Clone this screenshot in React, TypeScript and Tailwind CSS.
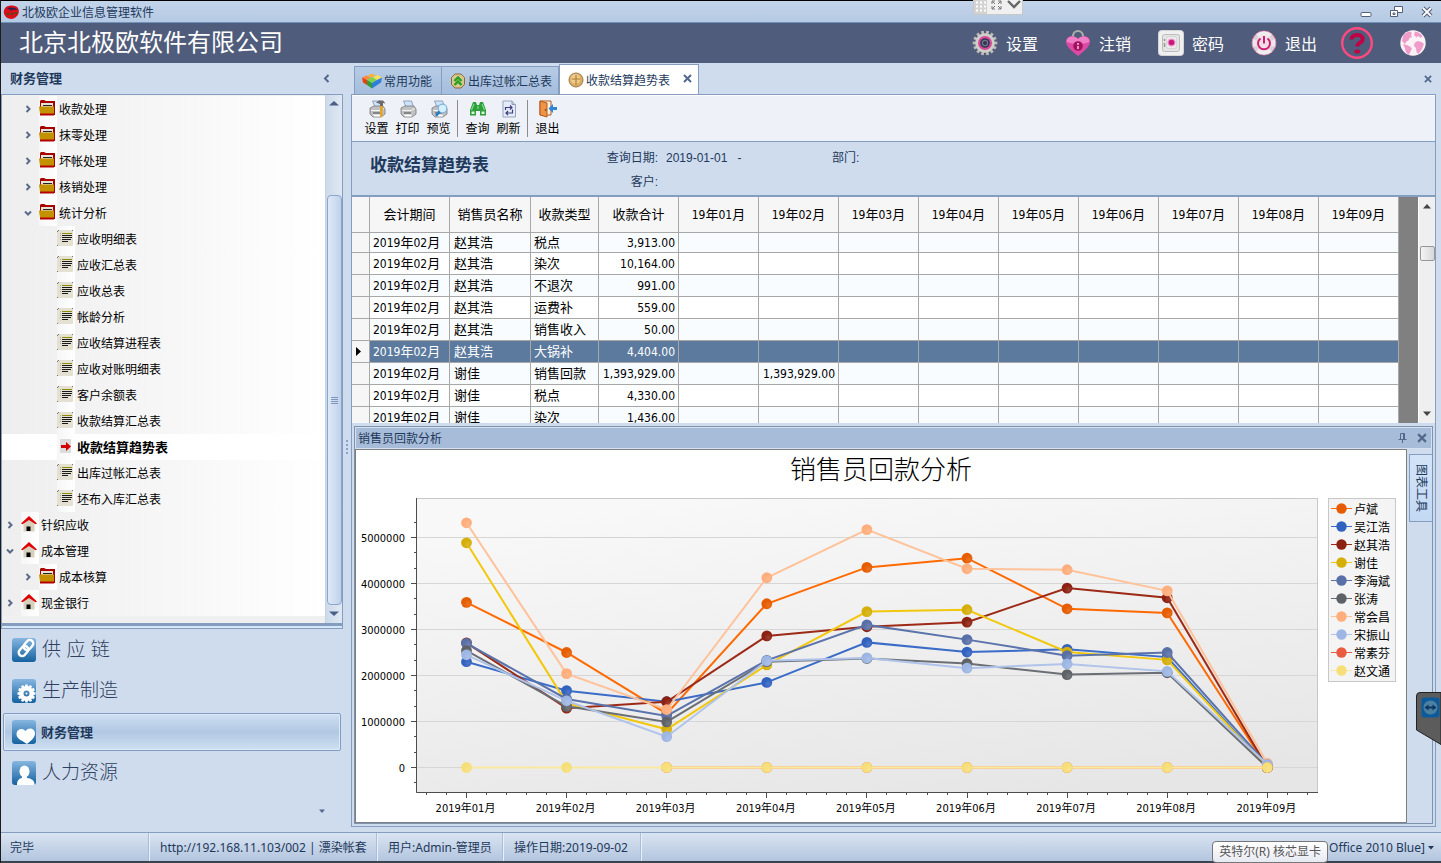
import React from "react";

const CATEGORIES = ["01", "02", "03", "04", "05", "06", "07", "08", "09"];

type Series = { name: string; line: string; dot: string; values: (number | null)[] };

// Values are in thousands.
const SERIES: Series[] = [
  { name: "卢斌", line: "#ff6a00", dot: "#e65c00", values: [3590, 2500, 1170, 3560, 4350, 4550, 3450, 3360, 0] },
  { name: "吴江浩", line: "#3a6cc8", dot: "#3162c0", values: [2300, 1670, 1430, 1850, 2720, 2510, 2570, 2400, 0] },
  { name: "赵其浩", line: "#9c2a17", dot: "#8c2111", values: [2710, 1290, 1430, 2860, 3060, 3160, 3900, 3690, 0] },
  { name: "谢佳", line: "#f2c80f", dot: "#d6ae0a", values: [4885, 1400, 830, 2230, 3390, 3430, 2510, 2340, 0] },
  { name: "李海斌", line: "#5a73ab", dot: "#586fa7", values: [2700, 1490, 1120, 2330, 3100, 2780, 2430, 2500, 60] },
  { name: "张涛", line: "#6b6f75", dot: "#5e6267", values: [2540, 1330, 990, 2300, 2370, 2260, 2020, 2060, 0] },
  { name: "常会昌", line: "#ffc39b", dot: "#ffae7c", values: [5320, 2040, 1260, 4125, 5170, 4320, 4300, 3840, 90] },
  { name: "宋振山", line: "#b0c3ea", dot: "#9db6e4", values: [2450, 1450, 670, 2320, 2380, 2160, 2250, 2090, 70] },
  { name: "常素芬", line: "#f9ba93", dot: "#ea5a40", values: [null, null, 0, 0, 0, 0, 0, 0, 0] },
  { name: "赵文通", line: "#fae9a0", dot: "#f6de78", values: [0, 0, 0, 0, 0, 0, 0, 0, 0] },
];

const px = (i: number) => 466.5 + i * 100.1;
const py = (v: number) => 767.5 - (v * 46) / 1000;

function Chart() {
  const minorY = [];
  for (let k = -1; k <= 16; k++) minorY.push(767.5 - (k * 46) / 3);
  const minorX = [];
  for (let k = 0; k <= 44; k++) minorX.push(426.5 + k * 20.02);
  return (
    <svg className="block h-full w-full" viewBox="356 450 1050 372" role="img" aria-label="销售员回款分析">
      <defs>
        <linearGradient id="plot" x1="0.3" y1="0" x2="0.7" y2="1">
          <stop offset="0" stopColor="#f8f8f8" />
          <stop offset="1" stopColor="#e6e6e6" />
        </linearGradient>
        <radialGradient id="gloss" cx="0.65" cy="0.65" r="0.6">
          <stop offset="0" stopColor="#fff" stopOpacity="0.14" />
          <stop offset="0.7" stopColor="#fff" stopOpacity="0" />
        </radialGradient>
      </defs>
      <text x="881" y="479" textAnchor="middle" fontSize="26" fontWeight="300">销售员回款分析</text>
      <rect x="416.5" y="498.5" width="901" height="294" fill="url(#plot)" stroke="#c8c8c8" />
      {[0, 1, 2, 3, 4, 5].map((m) => (
        <g key={m}>
          <path d={`M417 ${py(m * 1000)}H1317`} stroke="#d6d6d6" />
          <path d={`M411 ${py(m * 1000)}h5`} stroke="#4d4d4d" />
          <text x="405" y={py(m * 1000) + 4} textAnchor="end" fontSize="11">{m * 1000000}</text>
        </g>
      ))}
      {minorY.map((y) => <path key={y} d={`M414 ${Math.floor(y) + 0.5}h2`} stroke="#4d4d4d" />)}
      {minorX.map((x) => <path key={x} d={`M${Math.floor(x) + 0.5} 793v2`} stroke="#4d4d4d" />)}
      <path d="M416.5 498V792.5H1318" fill="none" stroke="#4d4d4d" />
      {CATEGORIES.map((c, i) => (
        <g key={c}>
          <path d={`M${Math.floor(px(i)) + 0.5} 793v5`} stroke="#4d4d4d" />
          <text x={px(i) - 1} y="812" textAnchor="middle" fontSize="11">2019年{c}月</text>
        </g>
      ))}
      {SERIES.map((s) => {
        const pts = s.values.map((v, i) => ({ v, i })).filter((p) => p.v !== null);
        return (
          <g key={s.name}>
            <polyline
              points={pts.map((p) => `${px(p.i)},${py(p.v as number)}`).join(" ")}
              fill="none"
              stroke={s.line}
              strokeWidth={s.name === "常素芬" ? 3 : 2}
            />
            {pts.map((p) => (
              <g key={p.i}>
                <circle cx={px(p.i)} cy={py(p.v as number)} r="5.4" fill={s.dot} />
                <circle cx={px(p.i)} cy={py(p.v as number)} r="5.4" fill="url(#gloss)" />
              </g>
            ))}
          </g>
        );
      })}
      <rect x="1328.500" y="498.500" width="67" height="183" fill="#f4f4f4" stroke="#c8c8c8" />
      {SERIES.map((s, i) => (
        <g key={s.name}>
          <path d={`M1331 ${508.5 + i * 18}h21`} stroke={s.name === "常素芬" ? s.dot : s.line} />
          <circle cx="1341.500" cy={508.5 + i * 18} r="5.2" fill={s.dot} />
          <text x="1354" y={513.5 + i * 18} fontSize="12">{s.name}</text>
        </g>
      ))}
    </svg>
  );
}

/* ---------- icons ---------- */

const FolderIcon = () => (
  <svg width="16" height="16" viewBox="0 0 16 16" aria-hidden="true">
    <path d="M1 7V1l1-1h3l2 1h9v14H1z" fill="#a80000" />
    <path d="M2 3h12v4H2z" fill="#e6e2d6" />
    <path d="M4 5.500h9" stroke="#222" />
    <path d="M0 6.500h15V14H1z" fill="#c49200" />
    <path d="M1 13.500h14v2H1z" fill="#b40000" />
  </svg>
);

const DocIcon = () => (
  <svg width="16" height="16" viewBox="0 0 16 16" aria-hidden="true">
    <rect x="0" y="0" width="16" height="16" rx="1" fill="#e4e0d2" />
    <path d="M0 1.500h1M1 .5h1M15 .5h1M0 15.500h1" stroke="#777" />
    <path d="M5 3.500h10" stroke="#8f8b00" />
    <path d="M5 5.500h10M5 7.500h10M5 9.500h9M5 11.500h6" stroke="#1a1a1a" />
    <path d="M3 3.500h1M3 5.500h1M3 7.500h1M3 9.500h1" stroke="#aaa" />
  </svg>
);

const ActiveIcon = () => (
  <svg width="16" height="16" viewBox="0 0 16 16" aria-hidden="true">
    <rect x="3" y="1" width="11" height="14" rx="1" fill="#dcdcdc" />
    <path d="M4 7h5V4l5 4.500-5 4.500v-3H4z" fill="#d40000" />
  </svg>
);

const HomeIcon = () => (
  <svg width="16" height="16" viewBox="0 0 16 16" aria-hidden="true">
    <path d="M2.500 7.500L8 3l5.500 4.500V15.500h-11z" fill="#d6d1bd" />
    <path d="M0 7.500L8 0l8 7.500-1.500.8L8 4 1.500 8.300z" fill="#e00000" />
    <rect x="5.500" y="10.500" width="4" height="4.500" fill="#000" />
  </svg>
);

const Arrow = ({ open }: { open?: boolean }) => (
  <svg width="8" height="8" viewBox="0 0 8 8" aria-hidden="true" className="shrink-0">
    <path d={open ? "M1 2.500l3 3 3-3" : "M2.500 1l3 3-3 3"} fill="none" stroke="#5a6a8a" strokeWidth="2" />
  </svg>
);

const Cross = ({ size = 9, color = "#54688e" }: { size?: number; color?: string }) => (
  <svg width={size} height={size} viewBox="0 0 9 9" aria-hidden="true">
    <path d="M1 1l7 7M8 1L1 8" stroke={color} strokeWidth="2" />
  </svg>
);

const GearTeeth = ({ n, r1, r2, w, fill, c }: { n: number; r1: number; r2: number; w: number; fill: string; c: number }) => (
  <g stroke={fill} strokeWidth={w}>
    {Array.from({ length: n }, (_, i) => {
      const a = (i * 2 * Math.PI) / n;
      return (
        <path
          key={i}
          d={`M${c + r1 * Math.cos(a)} ${c + r1 * Math.sin(a)}L${c + r2 * Math.cos(a)} ${c + r2 * Math.sin(a)}`}
        />
      );
    })}
  </g>
);

const SettingsBig = () => (
  <svg width="26" height="26" viewBox="0 0 26 26" aria-hidden="true">
    <GearTeeth n={14} r1={7} r2={12.3} w={2.8} fill="#bdbdb8" c={13} />
    <circle cx="13" cy="13" r="9.800" fill="#cfcfca" />
    <circle cx="13" cy="13" r="7" fill="#d9489a" />
    <circle cx="13" cy="13" r="4.800" fill="#33384f" />
    <circle cx="13" cy="13" r="2.600" fill="none" stroke="#6d7693" strokeWidth="1.200" />
  </svg>
);

const LockBig = () => (
  <svg width="26" height="28" viewBox="0 0 26 28" aria-hidden="true">
    <path d="M8 10V7a5 5 0 0 1 10 0v3" fill="none" stroke="#a9aea6" strokeWidth="2.200" />
    <path d="M13 27C8 23 1 18 1 12.500 1 7 9 5.500 13 10c4-4.500 12-3 12 2.500C25 18 18 23 13 27z" fill="#dd4aa6" />
    <path d="M1.500 13C2 7 9 6 13 10c4-4 11-3 11.500 3-7 2.500-16 2.500-23 0z" fill="#ef7ec6" />
    <circle cx="13" cy="17" r="4.800" fill="#a3125f" />
    <path d="M13 14v2M13 17v3" stroke="#f2a5d2" strokeWidth="1.800" />
  </svg>
);

const SafeBig = () => (
  <svg width="26" height="26" viewBox="0 0 26 26" aria-hidden="true">
    <rect x="0.500" y="0.500" width="25" height="25" rx="3" fill="#f0f0f0" stroke="#d4d4d4" />
    <rect x="4.500" y="4.500" width="17" height="17" rx="2" fill="#e4e4e4" stroke="#bdbdbd" />
    <rect x="8.500" y="6.500" width="10" height="12" rx="2" fill="#ededed" stroke="#d5d5d5" />
    <circle cx="13.500" cy="12.500" r="4" fill="#f09aca" />
    <circle cx="13.500" cy="12.500" r="2.800" fill="#c9197e" />
    <path d="M6.500 9v2M6.500 13v4" stroke="#999" strokeWidth="1.500" />
  </svg>
);

const PowerBig = () => (
  <svg width="26" height="26" viewBox="0 0 26 26" aria-hidden="true">
    <circle cx="13" cy="13" r="12" fill="#d9d2d6" stroke="#cf6ba0" />
    <path d="M13 13L5 4a12 12 0 0 1 16 0zM13 13L5 22a12 12 0 0 0 16 0z" fill="#fff" opacity=".6" />
    <path d="M13 13L1.500 9v8zM13 13l11.500-4v8z" fill="#fff" opacity=".5" />
    <circle cx="13" cy="13" r="8" fill="#f1dde7" opacity=".7" />
    <path d="M9.500 8.500a6 6 0 1 0 7 0" fill="none" stroke="#d01f72" strokeWidth="2" />
    <path d="M13 6v7.500" stroke="#d01f72" strokeWidth="2" />
  </svg>
);

const HelpBig = () => (
  <svg width="32" height="32" viewBox="0 0 32 32" aria-hidden="true">
    <circle cx="16" cy="16" r="14.800" fill="none" stroke="#ff4a80" strokeWidth="2.400" />
    <path d="M10.500 12.500c0-3 2.500-4.500 5.500-4.500s5.700 1.500 5.700 4.200c0 3.500-5.500 3.300-5.500 7.300" fill="none" stroke="#c00045" strokeWidth="4" />
    <ellipse cx="16.200" cy="24.500" rx="3" ry="2" fill="#c00045" />
  </svg>
);

const GlobeBig = () => (
  <svg width="26" height="26" viewBox="0 0 26 26" aria-hidden="true">
    <circle cx="13" cy="13" r="12.700" fill="#faf2f6" />
    <path d="M3 6c1.500-2.500 4-4 7-4.500l2 1.500-1 2 1 2-2.500 1-1 2.500-2 1L5 14l-3-3zM15 1.500c3 .5 5.500 2 7.500 4.500L21 8l-3-2-1.500 1.500L14 5zM3 14l4 1 3 1.500 2 2-1.500 3L9 25l-3-2.500-1-4zM14.500 13l3-2 4 1 2.500 2-2 5-3.500 5-2-2-.5-4-2-2z" fill="#f09cc8" />
  </svg>
);

const TabCubes = () => (
  <svg width="20" height="16" viewBox="0 0 20 16" aria-hidden="true">
    <path d="M0 4.500L4.500 2.500 9 4.500 5 7z" fill="#ff8a3c" />
    <path d="M6 2.500L10 .5l3.500 2L10 4.500z" fill="#ffb02c" />
    <path d="M11 5l4.500-3L20 4.500 15 7z" fill="#ffe04c" />
    <path d="M5 7l5-3 5 3-5 3z" fill="#7fd24c" />
    <path d="M0 4.500L5 7v5L1 9.500z" fill="#e8400e" />
    <path d="M5 7l5 3v5.500L5 12z" fill="#2f9d3a" />
    <path d="M10 10l5-3 5-2.500-1 5-9 6z" fill="#2f7fd8" />
  </svg>
);

const TabHex = () => (
  <svg width="16" height="16" viewBox="0 0 16 16" aria-hidden="true">
    <path d="M5 1h6l3.500 3.500v7L11 15H5l-3.500-3.500v-7z" fill="#d8c88c" stroke="#8a6a3e" />
    <path d="M4.500 8L8 4.500 11.500 8M4.500 12L8 8.500l3.500 3.500" fill="none" stroke="#25a022" strokeWidth="2.400" />
  </svg>
);

const TabCoin = () => (
  <svg width="16" height="16" viewBox="0 0 16 16" aria-hidden="true">
    <circle cx="8" cy="8" r="7" fill="#d9ad62" stroke="#9b7a4b" />
    <circle cx="7.500" cy="7" r="5" fill="#edcb8a" />
    <path d="M8 3v10M3.500 7h9" stroke="#b27f37" strokeWidth="1.200" />
  </svg>
);

const PrinterShape = () => (
  <g>
    <path d="M4.500 1h8l2 6H7z" fill="#cfe3fb" stroke="#7d93b4" strokeWidth=".8" />
    <path d="M2 8l4-2h9l2 3v5l-4 3H5l-3-3z" fill="#bfc1c3" stroke="#77797c" strokeWidth=".8" />
    <path d="M3 10.500h9l4-2" stroke="#f2f2f2" fill="none" />
    <path d="M5 13h7" stroke="#4a4a4a" />
    <path d="M5 14.500h7l1 2H6z" fill="#fff" />
  </g>
);

const SetupIcon = () => (
  <svg width="18" height="18" viewBox="0 0 18 18" aria-hidden="true">
    <PrinterShape />
    <path d="M8 2.500L11 .5h4l2.500 3L15 3v3h-3V4z" fill="#6c6c6c" />
    <path d="M12 6h3l-.5 11H12z" fill="#e2a52a" />
  </svg>
);
const PrintIcon = () => (
  <svg width="18" height="18" viewBox="0 0 18 18" aria-hidden="true"><PrinterShape /></svg>
);
const PreviewIcon = () => (
  <svg width="18" height="18" viewBox="0 0 18 18" aria-hidden="true">
    <PrinterShape />
    <circle cx="12.500" cy="8.500" r="4.300" fill="#d4f0ff" stroke="#7fb4da" strokeWidth="1.200" />
    <path d="M9.500 11.500L6 16" stroke="#1f7fc8" strokeWidth="2.600" />
  </svg>
);
const FindIcon = () => (
  <svg width="18" height="18" viewBox="0 0 18 18" aria-hidden="true">
    <path d="M4 2h3l1 3h2l1-3h3l3 8v5.500h-6V11H7v4.500H1V10z" fill="#2f9e3c" />
    <path d="M5 4l-2.500 6M13 4l2.500 6M9 6v3" stroke="#7fdc86" strokeWidth="1.200" />
    <path d="M2.500 11.500h3v2.500h-3zM12.500 11.500h3v2.500h-3z" fill="#d9f7d9" />
  </svg>
);
const RefreshIcon = () => (
  <svg width="18" height="18" viewBox="0 0 18 18" aria-hidden="true">
    <path d="M3 1h9l3.500 3.500V17H3z" fill="#e3ecf8" stroke="#95a5bf" />
    <path d="M12 1v3.500h3.500" fill="#c5d3e8" stroke="#8b9cb8" />
    <path d="M5.500 10V7.500h6M10 5.500l2 2-2 2M12.500 9.500V13h-6M8 11l-2 2 2 2" fill="none" stroke="#3c3f7c" strokeWidth="1.200" />
  </svg>
);
const ExitIcon = () => (
  <svg width="18" height="18" viewBox="0 0 18 18" aria-hidden="true">
    <path d="M1 1h11v14H1z" fill="#fff2e0" stroke="#b3581e" />
    <path d="M1 1l7 2v14l-7-2z" fill="#ee9444" stroke="#b3581e" />
    <circle cx="6.500" cy="10" r=".8" fill="#6b2e08" />
    <path d="M9.500 8.500l4.500-4.500v3h4v3h-4v3z" fill="#2d86d8" />
  </svg>
);

const Tile = ({ children }: { children: React.ReactNode }) => (
  <svg width="24" height="24" viewBox="0 0 24 24" aria-hidden="true">
    <defs>
      <linearGradient id="tile" x1="0" y1="0" x2="0" y2="1">
        <stop offset="0" stopColor="#86b6e0" />
        <stop offset="1" stopColor="#15629f" />
      </linearGradient>
    </defs>
    <rect width="24" height="24" rx="3" fill="url(#tile)" />
    {children}
  </svg>
);

/* ---------- data ---------- */

type Node = { text: string; level: 0 | 1 | 2; kind: "folder" | "doc" | "home" | "active"; open?: boolean };

const TREE: Node[] = [
  { text: "收款处理", level: 1, kind: "folder" },
  { text: "抹零处理", level: 1, kind: "folder" },
  { text: "坏帐处理", level: 1, kind: "folder" },
  { text: "核销处理", level: 1, kind: "folder" },
  { text: "统计分析", level: 1, kind: "folder", open: true },
  { text: "应收明细表", level: 2, kind: "doc" },
  { text: "应收汇总表", level: 2, kind: "doc" },
  { text: "应收总表", level: 2, kind: "doc" },
  { text: "帐龄分析", level: 2, kind: "doc" },
  { text: "应收结算进程表", level: 2, kind: "doc" },
  { text: "应收对账明细表", level: 2, kind: "doc" },
  { text: "客户余额表", level: 2, kind: "doc" },
  { text: "收款结算汇总表", level: 2, kind: "doc" },
  { text: "收款结算趋势表", level: 2, kind: "active" },
  { text: "出库过帐汇总表", level: 2, kind: "doc" },
  { text: "坯布入库汇总表", level: 2, kind: "doc" },
  { text: "针织应收", level: 0, kind: "home" },
  { text: "成本管理", level: 0, kind: "home", open: true },
  { text: "成本核算", level: 1, kind: "folder" },
  { text: "现金银行", level: 0, kind: "home" },
];

const INDENT = { 0: "pl-[4px]", 1: "pl-[22px]", 2: "pl-[40px]" };

const ROWS = [
  ["赵其浩", "税点", "3,913.00", ""],
  ["赵其浩", "染次", "10,164.00", ""],
  ["赵其浩", "不退次", "991.00", ""],
  ["赵其浩", "运费补", "559.00", ""],
  ["赵其浩", "销售收入", "50.00", ""],
  ["赵其浩", "大锅补", "4,404.00", ""],
  ["谢佳", "销售回款", "1,393,929.00", "1,393,929.00"],
  ["谢佳", "税点", "4,330.00", ""],
  ["谢佳", "染次", "1,436.00", ""],
];
const SELECTED = 5;

/* ---------- regions ---------- */

function TitleBar() {
  return (
    <div className="flex h-[23px] shrink-0 items-center border-t border-b border-t-black border-b-[#6f93bd] bg-linear-to-b from-[#c3d4ea] to-[#b5cae3] pl-[2px] text-[12px] text-[#1e395b]">
      <svg width="17" height="16" viewBox="0 0 17 16" aria-hidden="true">
        <path d="M3 3C6 1 11 1 14 3c3 3 2 8-1 10-3 3-8 2-10 0C0 10 0 6 3 3z" fill="#d8101c" />
        <path d="M4 4.500c3-2 7-1 11 1l-4 .5-1.500-.8-1 1.800L7 5.500z" fill="#2a2350" />
        <path d="M4 10h2M8 10h2M12 9h2" stroke="#2f5a12" strokeWidth="2" />
      </svg>
      <span className="ml-[2px] pt-[2px]">北极欧企业信息管理软件</span>
      <div className="ml-auto flex items-center gap-[18px] pr-[8px]">
        <button aria-label="最小化" className="h-[12px]">
          <svg width="12" height="12" viewBox="0 0 12 12"><rect x="1" y="6.500" width="10" height="4" rx="1" fill="#fff" stroke="#55617a" /></svg>
        </button>
        <button aria-label="还原" className="h-[12px]">
          <svg width="13" height="12" viewBox="0 0 13 12" fill="#fff" stroke="#55617a"><path d="M4.500.5h8v6h-8z" /><path d="M.5 4.500h7v6h-7z" /><path d="M3 7h2v1.500H3z" /></svg>
        </button>
        <button aria-label="关闭" className="h-[12px]">
          <svg width="12" height="12" viewBox="0 0 12 12"><path d="M2 2l8 8M10 2L2 10" stroke="#55617a" strokeWidth="4" /><path d="M2 2l8 8M10 2L2 10" stroke="#fff" strokeWidth="1.800" /></svg>
        </button>
      </div>
    </div>
  );
}

function Header() {
  const link = "flex items-center gap-[8px]";
  return (
    <header className="flex h-[40px] shrink-0 items-center bg-[#505c7b] pl-[18px] pr-[15px] text-white">
      <h1 className="text-[24px] leading-[40px]">北京北极欧软件有限公司</h1>
      <nav className="ml-auto flex items-center text-[16px]">
        <button className={`${link} mr-[27px]`}><SettingsBig /><span className="pt-[3px]">设置</span></button>
        <button className={`${link} mr-[27px]`}><LockBig /><span className="pt-[3px]">注销</span></button>
        <button className={`${link} mr-[27px]`}><SafeBig /><span className="pt-[3px]">密码</span></button>
        <button className={`${link} mr-[24px]`}><PowerBig /><span className="pt-[3px]">退出</span></button>
        <button aria-label="帮助" className="mr-[27px]"><HelpBig /></button>
        <button aria-label="网络"><GlobeBig /></button>
      </nav>
    </header>
  );
}

function TreeRow({ node }: { node: Node }) {
  const active = node.kind === "active";
  return (
    <li>
      <button
        className={`flex h-[26px] w-full items-center text-left ${INDENT[node.level]} ${
          active ? "bg-white font-bold" : "bg-linear-to-r from-[#eeeeee] to-white"
        }`}
      >
        <span className="flex w-[15px] shrink-0">{node.level < 2 && <Arrow open={node.open} />}</span>
        <span className="flex h-[26px] w-[18px] shrink-0 items-center bg-linear-to-r from-[#f6f6f6] to-white pb-[2px]">
          {node.kind === "folder" && <FolderIcon />}
          {node.kind === "doc" && <DocIcon />}
          {node.kind === "home" && <HomeIcon />}
          {active && <ActiveIcon />}
        </span>
        <span className={active ? "pt-[2px] pl-[2px] text-[13px]" : "pt-[2px] pl-[2px] text-[12px]"}>{node.text}</span>
      </button>
    </li>
  );
}

function Sidebar() {
  const nav = "flex h-[41px] w-full items-center gap-[6px] px-[11px] text-[19px] font-light text-[#2f415f]";
  return (
    <aside className="flex w-[350px] shrink-0 flex-col">
      <div className="flex h-[31px] shrink-0 items-center justify-between pl-[9px] pr-[20px]">
        <h2 className="pt-px text-[13px] font-bold text-[#1e395b]">财务管理</h2>
        <svg width="8" height="9" viewBox="0 0 8 9" aria-hidden="true"><path d="M5.500 1L2 4.500 5.500 8" fill="none" stroke="#54688e" strokeWidth="2" /></svg>
      </div>
      <div className="flex min-h-0 flex-1">
        <div className="flex w-[342px] flex-col">
          <div className="flex min-h-0 flex-1 border border-[#859ebf] bg-[#f0f0f0]">
            <ul className="min-w-0 flex-1 overflow-hidden pt-px">
              {TREE.map((n) => <TreeRow key={n.text} node={n} />)}
            </ul>
            <div className="flex w-[17px] flex-col items-center border-l border-[#c3d3e8] bg-linear-to-r from-[#cddaea] to-[#dfe9f5]">
              <svg className="my-[5px]" width="10" height="6" viewBox="0 0 10 6" aria-hidden="true"><path d="M0 5.500L5 1l5 4.500z" fill="#4b5f86" /></svg>
              <div className="mt-[84px] flex w-[15px] flex-1 flex-col items-center justify-center gap-px rounded-sm border border-[#8aa5c9] bg-linear-to-r from-[#dfe9f6] to-[#bfd2ea]">
                <i className="h-px w-[7px] bg-[#7d96bc]" />
                <i className="h-px w-[7px] bg-[#7d96bc]" />
                <i className="h-px w-[7px] bg-[#7d96bc]" />
                <i className="h-px w-[7px] bg-[#7d96bc]" />
              </div>
              <svg className="my-[6px]" width="10" height="6" viewBox="0 0 10 6" aria-hidden="true"><path d="M0 .5h10L5 5z" fill="#4b5f86" /></svg>
            </div>
          </div>
          <div className="h-[5px] border border-t-2 border-[#859ebf] bg-[#d5e6f8]" />
          <div className="flex h-[203px] flex-col">
            <button className={nav}>
              <Tile>
                <g fill="none" stroke="#fff" strokeWidth="2.400">
                  <rect x="6" y="9.500" width="11" height="7" rx="3.500" transform="rotate(-50 11.500 13)" />
                  <rect x="11" y="3.500" width="11" height="7" rx="3.500" transform="rotate(-50 16.500 7)" />
                </g>
              </Tile>
              <span className="whitespace-pre">供 应 链</span>
            </button>
            <button className={nav}>
              <Tile>
                <GearTeeth n={12} r1={5} r2={9} w={2.6} fill="#fff" c={14.5} />
                <circle cx="14.500" cy="14.500" r="5.200" fill="none" stroke="#fff" strokeWidth="4.400" />
                <circle cx="14.500" cy="14.500" r="1" fill="#fff" />
              </Tile>
              生产制造
            </button>
            <div className="px-[2px] pt-[2px] pb-px">
              <button className="flex h-[38px] w-full items-center gap-[5px] rounded-xs border border-[#7f9dc4] bg-linear-to-b from-[#cfe0f1] via-[#b1c7e3] to-[#cfe1f1] px-[8px] text-[13px] font-bold text-[#1e395b] shadow-[inset_0_0_0_1px_#dce9f6]">
                <Tile>
                  <path d="M15 24C11 21 4 19 4.500 13.500 5 8.500 11 7.500 13.500 11c3-4 9-3 9.500 2 .3 4-4 8-8 11z" fill="#fff" />
                </Tile>
                <span className="pt-px">财务管理</span>
              </button>
            </div>
            <button className={nav}>
              <Tile>
                <ellipse cx="12.500" cy="10.500" rx="5" ry="6" fill="#fff" />
                <path d="M10 13h5v4c4 .5 7 2 7.500 5.500V24H5v-1.500c.5-3.500 2-5 5-5.500z" fill="#fff" />
              </Tile>
              人力资源
            </button>
            <button aria-label="更多" className="mt-[16px] mr-[17px] ml-auto">
              <svg className="block" width="8" height="5" viewBox="0 0 8 5"><path d="M1 .5h6L4 4z" fill="#54688e" /></svg>
            </button>
          </div>
        </div>
        <div className="flex flex-1 flex-col items-center gap-[2px] pt-[346px]">
          <i className="size-[2px] bg-[#8aa5cc]" />
          <i className="size-[2px] bg-[#8aa5cc]" />
          <i className="size-[2px] bg-[#8aa5cc]" />
          <i className="size-[2px] bg-[#8aa5cc]" />
        </div>
      </div>
    </aside>
  );
}

function Tabs() {
  const tab =
    "flex h-[28px] items-center gap-[2px] border border-b-0 border-[#859ebf] bg-linear-to-b from-[#b6cbe5] to-[#a5bedd] text-[12px] text-[#1e395b]";
  return (
    <div className="flex h-[31px] shrink-0 items-end pl-[3px]">
      <button className={`${tab} w-[88px] pl-[7px]`}><TabCubes /><span className="pt-[2px]">常用功能</span></button>
      <button className={`${tab} w-[117px] border-l-0 pl-[8px]`}><TabHex /><span className="pt-[2px]">出库过帐汇总表</span></button>
      <div className="flex h-[30px] w-[140px] items-center border border-b-0 border-[#859ebf] bg-linear-to-b from-[#fdfeff] to-white pl-[8px] text-[12px] text-[#1e395b]">
        <TabCoin />
        <span className="pt-[2px] pl-[2px]">收款结算趋势表</span>
        <button aria-label="关闭标签" className="ml-auto pr-[6px] pb-[2px]"><Cross /></button>
      </div>
      <button aria-label="全部关闭" className="mr-[4px] mb-[11px] ml-auto"><Cross size={8} /></button>
    </div>
  );
}

function Toolbar() {
  const item = "flex w-[31px] flex-col items-center gap-[2px] text-[12px] leading-[18px]";
  const sep = "mr-[4px] ml-[3px] h-[37px] w-px bg-[#8c8c8c]";
  return (
    <div className="flex h-[46px] shrink-0 items-start border-t border-white bg-[#eef1f7] pt-[4px] pl-[9px]">
      <button className={item}><SetupIcon />设置</button>
      <button className={item}><PrintIcon />打印</button>
      <button className={item}><PreviewIcon />预览</button>
      <i className={sep} />
      <button className={item}><FindIcon />查询</button>
      <button className={item}><RefreshIcon />刷新</button>
      <i className={sep} />
      <button className={item}><ExitIcon />退出</button>
    </div>
  );
}

function QueryBand() {
  return (
    <div className="flex h-[56px] shrink-0 border-t border-b-2 border-[#859ebf] bg-[#cfdcee] text-[12px] text-[#1e395b]">
      <h2 className="w-[253px] pl-[18px] pt-[9px] text-[17px] leading-[28px] font-bold">收款结算趋势表</h2>
      <div className="grid grid-cols-[53px_174px_auto] content-start gap-y-[6px] pt-[7px] font-['Liberation_Sans','Noto_Sans_CJK_SC',sans-serif] leading-[18px]">
        <span className="text-right">查询日期:</span>
        <span className="pl-[8px] whitespace-pre">2019-01-01   -</span>
        <span>部门:</span>
        <span className="text-right">客户:</span>
      </div>
    </div>
  );
}

function Grid() {
  const cell = "border-r border-b border-[#a8a8a8] p-0 font-normal whitespace-nowrap overflow-hidden";
  const num = `${cell} pr-[3px] text-right`;
  return (
    <div className="flex h-[226px] shrink-0 overflow-hidden bg-[#808080]">
      <table className="h-[226px] w-[1047px] table-fixed border-separate border-spacing-0 self-start text-[12px] leading-[16px] text-black">
        <colgroup>
          <col className="w-[18px]" />
          <col className="w-[80px]" />
          <col className="w-[81px]" />
          <col className="w-[68px]" />
          <col className="w-[80px]" />
          {CATEGORIES.map((c) => <col key={c} className="w-[80px]" />)}
        </colgroup>
        <thead>
          <tr className="h-[36px] bg-[#f6f6f6] text-[13px]">
            <th className={cell} aria-label="行标" />
            <th className={cell}>会计期间</th>
            <th className={cell}>销售员名称</th>
            <th className={cell}>收款类型</th>
            <th className={cell}>收款合计</th>
            {CATEGORIES.map((c) => (
              <th key={c} className={cell}><span className="text-[12px]">19</span>年<span className="text-[12px]">{c}</span>月</th>
            ))}
          </tr>
        </thead>
        <tbody>
          {ROWS.map((r, i) => (
            <tr
              key={i}
              className={`${i === 0 ? "h-[20px]" : "h-[22px]"} ${
                i === SELECTED ? "bg-[#5b7a9e] text-white" : i % 2 ? "bg-white" : "bg-[#f8fcff]"
              }`}
            >
              <td className={`${cell} bg-[#f6f6f6]`}>
                {i === SELECTED && (
                  <svg className="ml-[4px]" width="6" height="9" viewBox="0 0 6 9"><path d="M0 0l5 4.500L0 9z" /></svg>
                )}
              </td>
              <td className={`${cell} pl-[3px]`}>2019<span className="text-[13px]">年</span>02<span className="text-[13px]">月</span></td>
              <td className={`${cell} pl-[4px] text-[13px]`}>{r[0]}</td>
              <td className={`${cell} pl-[3px] text-[13px]`}>{r[1]}</td>
              <td className={num}>{r[2]}</td>
              {CATEGORIES.map((c, k) => <td key={c} className={num}>{k === 1 ? r[3] : ""}</td>)}
            </tr>
          ))}
        </tbody>
      </table>
      <div className="ml-auto flex w-[17px] flex-col items-center justify-between border-l border-white bg-[#efefef] py-[7px]">
        <svg width="8" height="5" viewBox="0 0 8 5" aria-hidden="true"><path d="M0 4.500L4 0l4 4.500z" fill="#444" /></svg>
        <div className="mb-[113px] h-[15px] w-[15px] rounded-xs border border-[#979797] bg-linear-to-r from-[#f4f4f4] to-[#d8d8d8]" />
        <svg width="8" height="5" viewBox="0 0 8 5" aria-hidden="true"><path d="M0 .5h8L4 5z" fill="#444" /></svg>
      </div>
    </div>
  );
}

function Dock() {
  return (
    <section className="flex min-h-0 flex-1 flex-col bg-[#cfdcee] px-[2px] pt-[3px] pb-[2px]">
      <div className="flex min-h-0 flex-1 flex-col border border-[#7f93b0]">
        <div className="flex h-[22px] shrink-0 items-center border border-[#d5e1f0] bg-[#a7bcd9] pr-[4px] pl-[2px] text-[12px] text-[#1e395b]">
          <h3 className="pt-[2px]">销售员回款分析</h3>
          <button aria-label="固定" className="mr-[10px] ml-auto">
            <svg width="9" height="10" viewBox="0 0 9 10" fill="none" stroke="#54688e"><path d="M2.500 6V.5h4V6M.5 6.500h8M4.500 7v3M5.500 1v5" /></svg>
          </button>
          <button aria-label="关闭面板"><Cross size={10} /></button>
        </div>
        <div className="flex min-h-0 flex-1">
          <div className="min-w-0 flex-1 border border-[#7f7f7f] bg-white"><Chart /></div>
          <div className="w-[25px] pt-[5px] pl-[2px]">
            <button className="flex h-[68px] w-full items-center justify-center border border-r-0 border-[#859ebf] bg-linear-to-b from-[#d3e4f8] to-[#c3d9f3] text-[12px] text-[#1e395b] [text-orientation:sideways] [writing-mode:vertical-rl]">
              图表工具
            </button>
          </div>
        </div>
      </div>
    </section>
  );
}

function StatusBar() {
  const part = "flex h-full items-center border-r border-[#a9bcd8] pt-[2px] shadow-[1px_0_0_#e8f0fa]";
  return (
    <footer className="relative flex h-[31px] shrink-0 items-center border-t border-b-2 border-t-[#859ebf] border-b-[#3b444c] bg-linear-to-b from-[#d9e4f2] to-[#b3c5de] font-['Noto_Sans','Noto_Sans_CJK_SC',sans-serif] text-[12px] text-[#1e395b]">
      <span className={`${part} w-[148px] pl-[9px]`}>完毕</span>
      <span className={`${part} w-[228px] pl-[11px]`}>http://192.168.11.103/002 | 漂染帐套</span>
      <span className={`${part} w-[126px] pl-[11px]`}>用户:Admin-管理员</span>
      <span className={`${part} w-[138px] pl-[11px]`}>操作日期:2019-09-02</span>
      <button className="ml-auto flex items-center gap-[3px] pt-[2px] pr-[7px]">
        Office 2010 Blue]
        <svg width="6" height="4" viewBox="0 0 6 4"><path d="M0 0h6L3 3.500z" fill="#1e395b" /></svg>
      </button>
      <div className="absolute right-[113px] bottom-[-2px] h-[22px] rounded-sm border border-[#767676] bg-linear-to-b from-white to-[#e8eaf2] px-[6px] leading-[20px] text-[#575757]">
        英特尔(R) 核芯显卡
      </div>
    </footer>
  );
}

export default function App() {
  return (
    <div className="relative flex h-screen w-full flex-col overflow-hidden border-l border-[#1c1c1c] bg-[#cfdcee] font-['DejaVu_Sans_Condensed','Noto_Sans_CJK_SC',sans-serif]">
      <TitleBar />
      <Header />
      <main className="flex min-h-0 flex-1">
        <Sidebar />
        <div className="flex min-w-0 flex-1 flex-col pr-[5px] pb-[5px]">
          <Tabs />
          <div className="flex min-h-0 flex-1 flex-col border border-[#859ebf]">
            <Toolbar />
            <QueryBand />
            <Grid />
            <Dock />
          </div>
        </div>
      </main>
      <StatusBar />
      <div className="absolute top-0 right-[418px] flex h-[15px] w-[50px] items-start border border-t-0 border-[#c8c8c8] bg-[#f0f0f0]">
        <svg width="48" height="14" viewBox="0 0 48 14" aria-hidden="true">
          <path d="M0 0h13v14H0z" fill="#d2d2d2" />
          <path d="M2 2.500h10M2 6.500h10M2 10.500h10" stroke="#fff" strokeWidth="2" strokeDasharray="2 2" />
          <path d="M18 4V1h3M24 1h3v3M27 6v3h-3M21 9h-3V6M18 1l3 3M27 1l-3 3M27 9l-3-3M18 9l3-3" fill="none" stroke="#777" />
          <path d="M34 1l6 6 6-6" fill="none" stroke="#666" strokeWidth="2.400" />
        </svg>
      </div>
      <svg className="absolute top-[692px] right-0" width="25" height="54" viewBox="0 0 25 54" aria-label="TeamViewer">
        <path d="M25 .5H4Q.5.500.5 4V38L25 52.500z" fill="#5c5c5c" stroke="#222" />
        <rect x="5.500" y="5.500" width="18" height="20" rx="3" fill="#0a5a9c" />
        <circle cx="14.500" cy="15.500" r="7" fill="#4d7f9f" />
        <path d="M8.500 15.500l4-3v2h4v-2l4 3-4 3v-2h-4v2z" fill="#0b3765" />
      </svg>
    </div>
  );
}
